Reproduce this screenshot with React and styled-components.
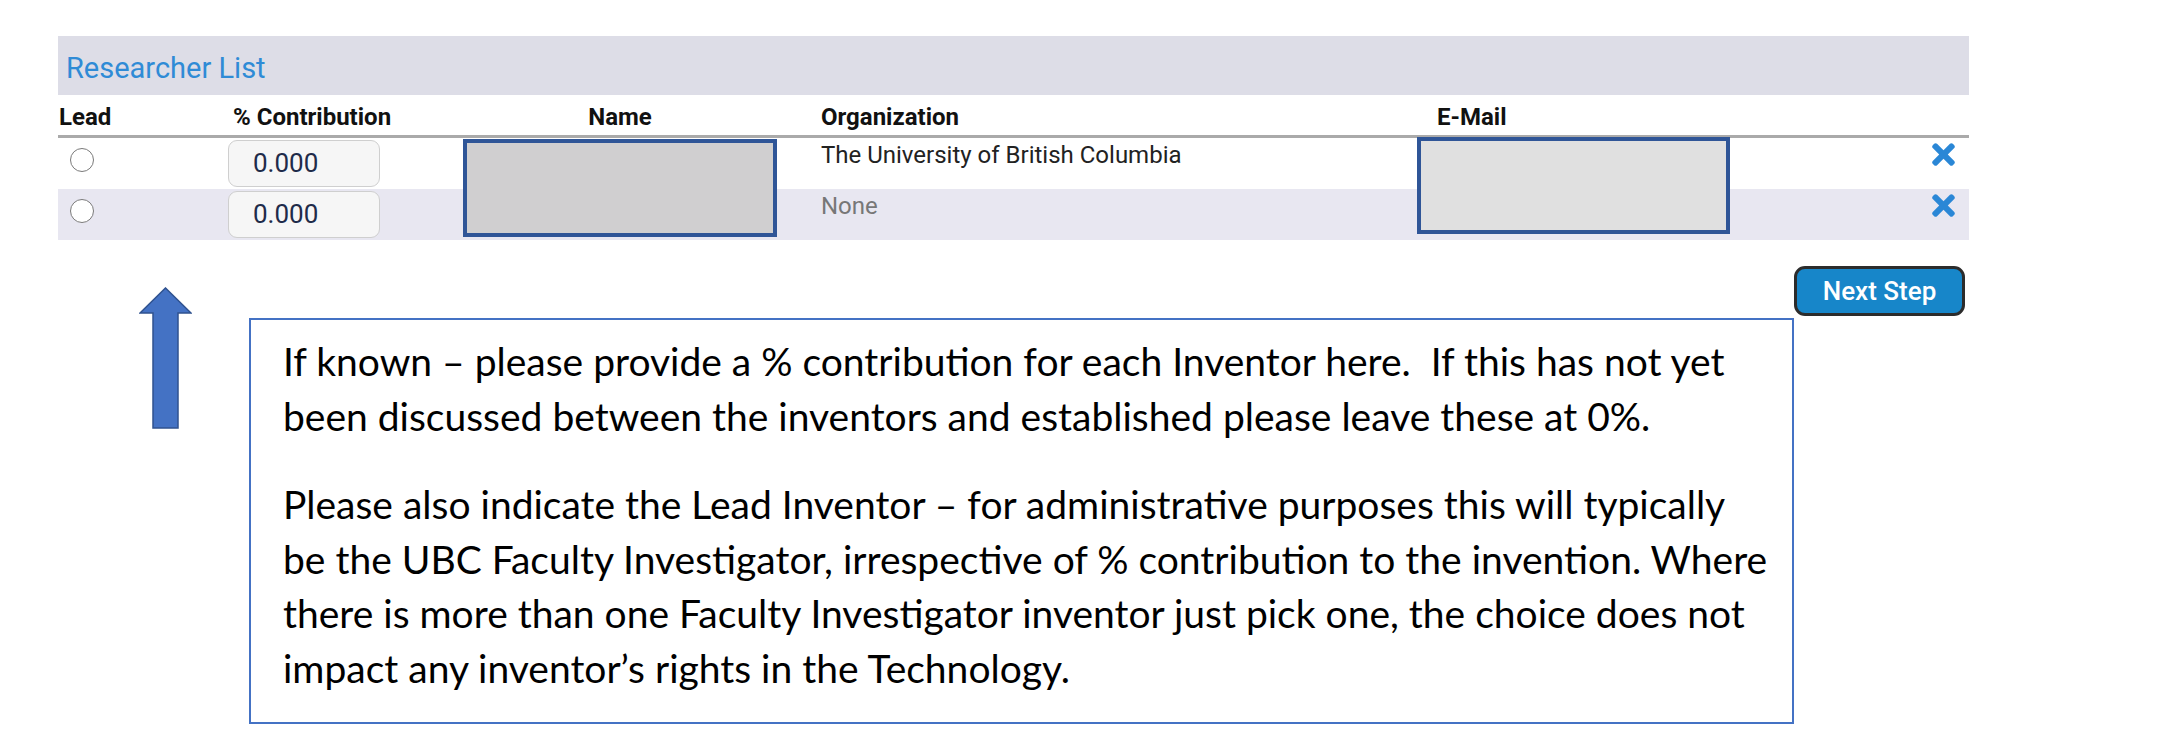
import styled, { createGlobalStyle } from "styled-components";
import { FaTimes } from "react-icons/fa";

const GlobalStyle = createGlobalStyle`
  body {
    margin: 0;
    background: #ffffff;
    font-family: Roboto, "Liberation Sans", sans-serif;
  }
`;

const Page = styled.div`
  width: 2184px;
  padding: 36px 0 0 58px;
  box-sizing: border-box;
`;

const Panel = styled.div`
  width: 1911px;
`;

const TitleBar = styled.div`
  height: 59px;
  box-sizing: border-box;
  padding: 18px 0 0 8px;
  background: #dddde7;
  color: #2f8bd6;
  font-size: 29px;
  line-height: 29px;
`;

const COLUMNS = "170px 235px 314px 640px 313px 1fr";

const HeadRow = styled.div`
  display: grid;
  grid-template-columns: ${COLUMNS};
  height: 43px;
  box-sizing: border-box;
  align-items: end;
  padding-bottom: 6px;
  border-bottom: 3px solid #aaaaaa;
  font-weight: 700;
  font-size: 24px;
  line-height: 24px;
  color: #111;
`;

const HeadCell = styled.div`
  padding-left: ${(p) => p.$pad || 0}px;
  text-align: ${(p) => (p.$center ? "center" : "left")};
`;

const Body = styled.div`
  position: relative;
`;

const Row = styled.div`
  display: grid;
  grid-template-columns: ${COLUMNS};
  height: 51px;
  align-items: start;
  background: ${(p) => (p.$alt ? "#e8e7f1" : "#ffffff")};
`;

const Radio = styled.span`
  display: block;
  width: 24px;
  height: 24px;
  margin: 10px 0 0 12px;
  box-sizing: border-box;
  border: 1.5px solid #7a7a7a;
  border-radius: 50%;
  background: #fff;
`;

const Percent = styled.div`
  width: 152px;
  height: 47px;
  margin-top: 2px;
  box-sizing: border-box;
  padding-left: 24px;
  border: 1px solid #cfcfcf;
  border-radius: 9px;
  background: #f6f6f6;
  color: #1f2b4a;
  font-size: 26px;
  line-height: 45px;
`;

const Org = styled.div`
  padding: 3px 0 0 44px;
  font-size: 24px;
  line-height: 28px;
  color: ${(p) => (p.$muted ? "#777777" : "#222222")};
`;

const Remove = styled.div`
  display: flex;
  justify-content: flex-end;
  padding: 0 9px 0 0;
  color: #2a87d6;
  font-size: 33px;
  line-height: 0;
`;

const Redaction = styled.div`
  position: absolute;
  box-sizing: border-box;
  border: 4px solid #2f5597;
  background: ${(p) => p.$fill};
`;

const Lower = styled.div`
  display: flex;
  align-items: flex-start;
`;

const ArrowWrap = styled.div`
  flex: none;
  padding: 47px 57px 0 81px;
`;

const Side = styled.div`
  flex: none;
  width: 1720px;
`;

const ButtonRow = styled.div`
  display: flex;
  justify-content: flex-end;
  padding: 26px 4px 2px 0;
`;

const NextButton = styled.button`
  width: 171px;
  height: 50px;
  border: 3px solid #2c2c2c;
  border-radius: 11px;
  background: #1786c9;
  color: #ffffff;
  font-family: Roboto, sans-serif;
  font-weight: 500;
  font-size: 26px;
  padding: 0;
`;

const Note = styled.div`
  width: 1545px;
  height: 406px;
  box-sizing: border-box;
  padding: 14px 0 0 32px;
  border: 2px solid #4472c4;
  font-family: Lato, "Noto Sans", sans-serif;
  font-size: 39px;
  line-height: 54.5px;
  color: #000;
`;

const Para = styled.p`
  margin: 0 0 34px;
  white-space: pre;
`;

function UpArrow() {
  return (
    <svg width="53" height="142" viewBox="0 0 53 142">
      <polygon
        points="26.5,1 52,26 39,26 39,141 14,141 14,26 1,26"
        fill="#4472c4"
        stroke="#2f528f"
        strokeWidth="1.5"
      />
    </svg>
  );
}

const researchers = [
  { org: "The University of British Columbia" },
  { org: "None", muted: true },
];

export default function App() {
  return (
    <Page>
      <GlobalStyle />
      <Panel>
        <TitleBar>Researcher List</TitleBar>
        <HeadRow>
          <HeadCell $pad={1}>Lead</HeadCell>
          <HeadCell $pad={5}>% Contribution</HeadCell>
          <HeadCell $center>Name</HeadCell>
          <HeadCell $pad={44}>Organization</HeadCell>
          <HeadCell $pad={20}>E-Mail</HeadCell>
          <HeadCell />
        </HeadRow>
        <Body>
          {researchers.map((r, i) => (
            <Row key={i} $alt={i % 2 === 1}>
              <Radio />
              <Percent>0.000</Percent>
              <div />
              <Org $muted={r.muted}>{r.org}</Org>
              <div />
              <Remove>
                <FaTimes />
              </Remove>
            </Row>
          ))}
          <Redaction $fill="#d0cfd0" style={{ left: 405, top: 1, width: 314, height: 98 }} />
          <Redaction $fill="#e0e0e0" style={{ left: 1359, top: -1, width: 313, height: 97 }} />
        </Body>
      </Panel>
      <Lower>
        <ArrowWrap>
          <UpArrow />
        </ArrowWrap>
        <Side>
          <ButtonRow>
            <NextButton>Next Step</NextButton>
          </ButtonRow>
          <Note>
            <Para>
              {"If known \u2013 please provide a % contribution for each Inventor here.  If this has not yet\nbeen discussed between the inventors and established please leave these at 0%."}
            </Para>
            <Para>
              {"Please also indicate the Lead Inventor \u2013 for administrative purposes this will typically\nbe the UBC Faculty Investigator, irrespective of % contribution to the invention. Where\nthere is more than one Faculty Investigator inventor just pick one, the choice does not\nimpact any inventor\u2019s rights in the Technology."}
            </Para>
          </Note>
        </Side>
      </Lower>
    </Page>
  );
}
